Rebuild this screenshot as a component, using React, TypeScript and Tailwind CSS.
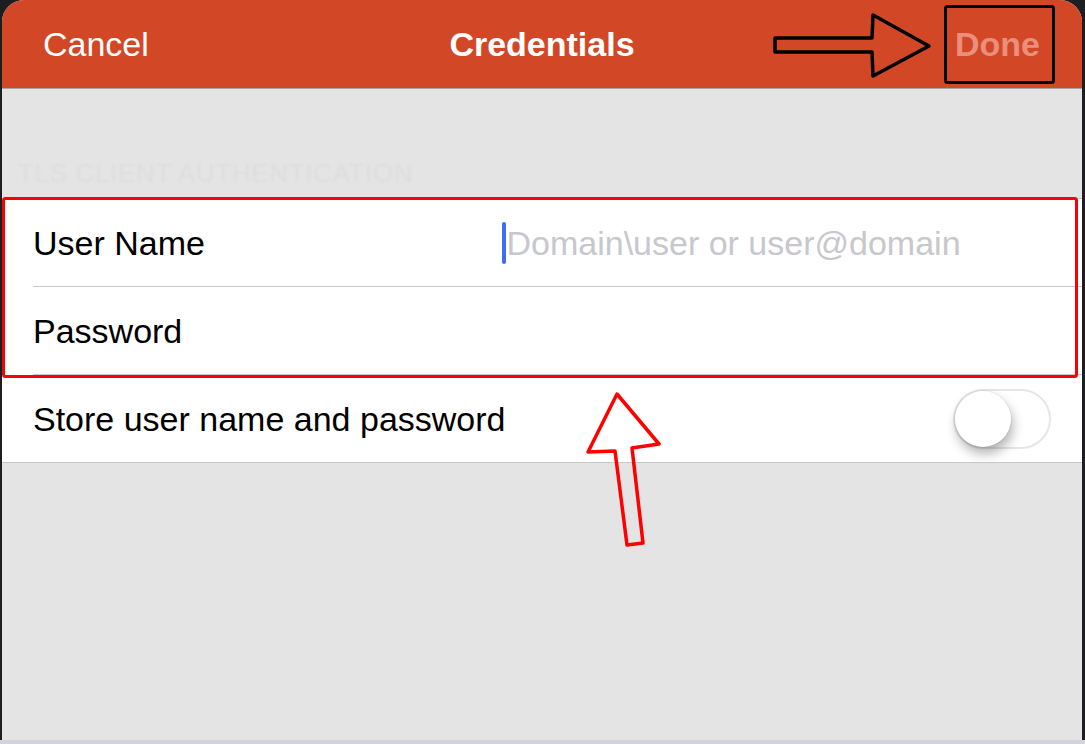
import { useState } from "react";

const font = { fontFamily: '"Liberation Sans", Arial, sans-serif' };

function Toggle() {
    const [on, setOn] = useState(false);

    return (
        <button
            onClick={() => setOn(v => !v)}
            className={`relative w-[98px] h-[60px] rounded-full border-2 border-[#e6e6ea] transition-colors ${on ? 'bg-[#4cd964] border-[#4cd964]' : 'bg-white'}`}
        >
            <span
                className={`absolute top-[0px] w-[56px] h-[56px] rounded-full bg-white shadow-[2px_7px_12px_rgba(0,0,0,0.3)] ring-1 ring-black/5 transition-all ${on ? 'left-[38px]' : 'left-[0px]'}`}
            />
        </button>
    );
}

function Annotations() {
    return (
        <svg
            className="absolute inset-0 pointer-events-none"
            width="1085"
            height="744"
            viewBox="0 0 1085 744"
        >
            {/* arrow pointing at Done */}
            <polygon
                points="775,38 872,38 873,15 929,46 873,76 872,52 775,52"
                fill="none"
                stroke="#000"
                strokeWidth="3.5"
                strokeLinejoin="round"
            />
            <rect x="945.5" y="6.5" width="108" height="76" rx="2" fill="none" stroke="#000" strokeWidth="3" />

            {/* box around the credential rows */}
            <rect x="3.5" y="198.5" width="1073" height="178" rx="2" fill="none" stroke="#ff0000" strokeWidth="3" />

            {/* arrow pointing up at the rows */}
            <polygon
                points="617,394 659,444 632,448 643,543 627,545 615,451 588,452"
                fill="none"
                stroke="#ff0000"
                strokeWidth="3.5"
                strokeLinejoin="round"
            />
        </svg>
    );
}

export default function App() {
    return (
        <div className="relative w-[1085px] h-[744px] overflow-hidden bg-[#1d1e21] flex flex-col" style={font}>
            <div className="flex-1 ml-[2px] w-[1080px] rounded-t-[22px] overflow-hidden bg-[#e4e4e4] flex flex-col">
                <header className="h-[89px] shrink-0 bg-[#d24826] border-b border-[#a5a5a5] grid grid-cols-[1fr_auto_1fr] items-center px-[41px] text-[34px] leading-none">
                    <span className="text-white">Cancel</span>
                    <span className="text-white font-bold">Credentials</span>
                    <span className="justify-self-end text-[#e98f7b] font-bold pr-[1px]">Done</span>
                </header>

                <div className="h-[109px] shrink-0 flex items-end pb-[12px] pl-[16px]">
                    <span className="text-[26px] leading-none tracking-wide text-[#dddddd] blur-[0.8px] uppercase">
                        TLS Client Authentication
                    </span>
                </div>

                <div className="bg-white border-y border-[#c8c8cc] text-[34px] leading-none text-black">
                    <div className="h-[88px] pl-[31px]">
                        <div className="h-full border-b border-[#c8c7cc] grid grid-cols-[469px_1fr] items-center">
                            <span>User Name</span>
                            <div className="flex items-center">
                                <span className="w-[3.5px] h-[42px] rounded-full bg-[#3f6cf2]" />
                                <span className="text-[#c7c7cd] ml-[1px]">Domain\user or user@domain</span>
                            </div>
                        </div>
                    </div>
                    <div className="h-[88px] pl-[31px]">
                        <div className="h-full border-b border-[#c8c7cc] flex items-center">
                            <span>Password</span>
                        </div>
                    </div>
                    <div className="h-[87px] pl-[31px] pr-[31px] flex items-center justify-between">
                        <span>Store user name and password</span>
                        <Toggle />
                    </div>
                </div>
            </div>
            <div className="h-[4px] shrink-0 bg-[#d2d4db]" />

            <Annotations />
        </div>
    );
}
